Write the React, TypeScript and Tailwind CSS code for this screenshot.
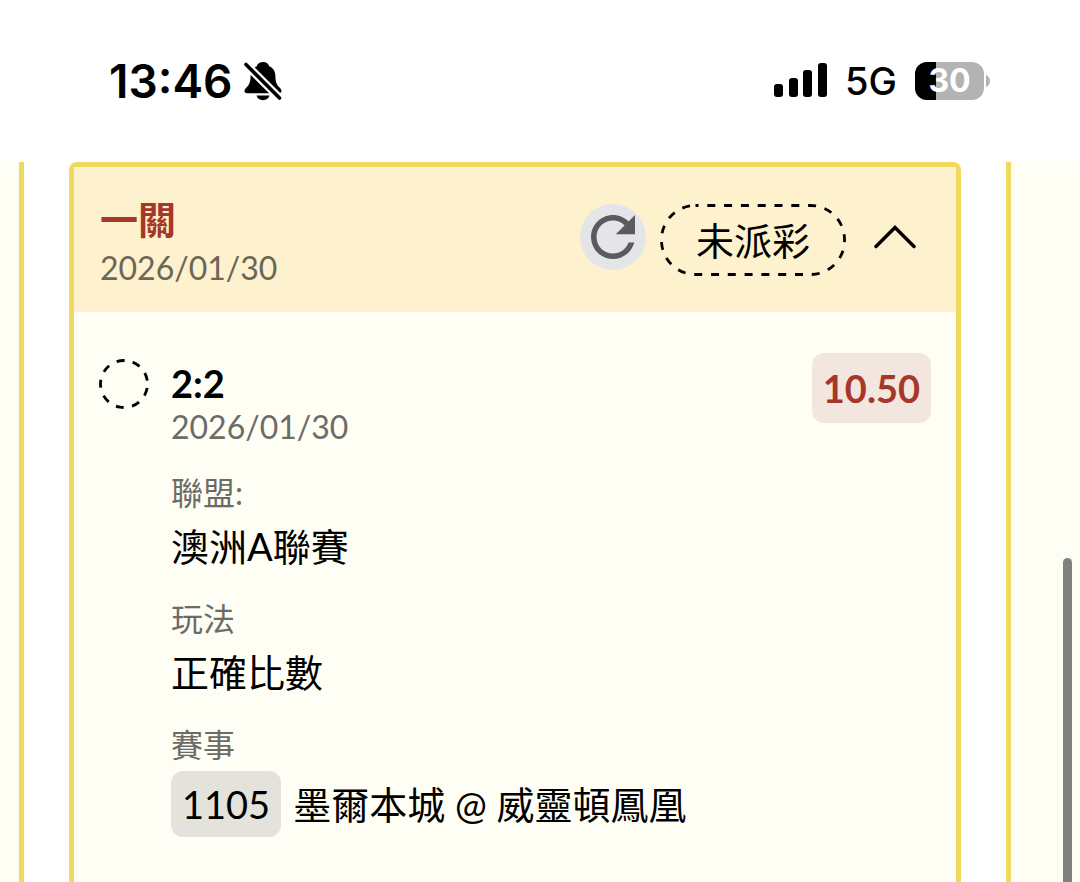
import { useState } from "react";

interface Detail {
  label: string;
  value: string;
}

const details: Detail[] = [
  { label: "聯盟:", value: "澳洲A聯賽" },
  { label: "玩法", value: "正確比數" },
];

const battery = 30;

function StatusBar() {
  return (
    <div className="flex h-[162px] items-center justify-between bg-white pl-[109px] pr-[90px] font-['Inter',sans-serif] text-black">
      <div className="flex items-center gap-3">
        <span className="text-[46px] leading-[56px] font-semibold">13:46</span>
        <svg width="38" height="40" viewBox="0 0 38 40" aria-label="Silent">
          <path
            d="M19 1c-3.4 0-5.6 1.8-6.2 4.3C8.6 7 6.700 10.500 6.600 15c-.1 6-1.200 8.600-3.900 11.200C1.300 27.600.5 28.700.5 30c0 1.300 1 2.200 2.600 2.200h31.800c1.600 0 2.600-.9 2.600-2.200 0-1.300-.8-2.400-2.200-3.800-2.700-2.600-3.800-5.200-3.900-11.200-.1-4.500-2-8-6.200-9.700C24.600 2.800 22.400 1 19 1z"
            fill="#000"
          />
          <path d="M12.500 34.500h13c-.8 2.900-3.300 4.700-6.500 4.700s-5.700-1.800-6.500-4.700z" fill="#000" />
          <path d="M0 1.500L38 39.500" stroke="#fff" strokeWidth="8" />
          <path d="M2 3.500L35.500 37" stroke="#000" strokeWidth="3.600" strokeLinecap="round" />
        </svg>
      </div>
      <div className="flex items-center gap-[18px]">
        <svg width="54" height="36" viewBox="0 0 54 36" aria-label="Signal">
          <rect x="1" y="21" width="9" height="13" rx="3" />
          <rect x="16" y="15" width="9" height="19" rx="3" />
          <rect x="30" y="7" width="9" height="27" rx="3" />
          <rect x="45" y="0" width="9" height="34" rx="3" />
        </svg>
        <span className="text-[38px] leading-[46px] font-medium">5G</span>
        <div className="flex items-center gap-[2px]">
          <div className="relative flex h-[38px] w-[69px] items-center justify-center overflow-hidden rounded-xl bg-[#b3b3b3]">
            <div className="absolute inset-y-0 left-0 bg-black" style={{ width: `${battery}%` }} />
            <span className="relative text-[32px] leading-[38px] font-bold text-white">{battery}</span>
          </div>
          <svg width="4" height="12" viewBox="0 0 4 12" fill="#b3b3b3" aria-hidden="true">
            <path d="M0 0c2.500 1 4 3.400 4 6s-1.500 5-4 6z" />
          </svg>
        </div>
      </div>
    </div>
  );
}

function RefreshIcon() {
  return (
    <svg width="66" height="66" viewBox="0 0 24 24" fill="#5b5b5d">
      <path d="M17.650 6.350C16.200 4.900 14.210 4 12 4c-4.420 0-7.990 3.580-7.990 8s3.570 8 7.990 8c3.730 0 6.840-2.550 7.730-6h-2.080c-.82 2.330-3.040 4-5.650 4-3.310 0-6-2.690-6-6s2.690-6 6-6c1.660 0 3.140.69 4.220 1.780L13 11h7V4l-2.350 2.350z" />
    </svg>
  );
}

export default function App() {
  const [open, setOpen] = useState(true);

  return (
    <div className="relative flex min-h-screen flex-col overflow-hidden bg-white font-['Lato','Noto_Sans_CJK_TC',sans-serif]">
      <StatusBar />
      <main className="flex flex-1">
        <div className="w-6 border-r-[5px] border-[#f0d95f] bg-[#fffef5]" />
        <section className="mx-[45px] flex flex-1 flex-col rounded-t-lg border-x-[5px] border-t-[5px] border-[#f0d95f] bg-[#fffef5]">
          <header className="flex items-start justify-between bg-[#fdf1ce] px-[26px] pb-5">
            <div className="pt-[27px]">
              <h1 className="text-[38px] leading-[50px] font-bold text-[#a5382a]">一關</h1>
              <p className="text-[32px] leading-12 text-[#6b6656]">2026/01/30</p>
            </div>
            <div className="flex items-start pt-[37px] pr-3.5">
              <button
                type="button"
                aria-label="Refresh"
                className="mr-3.5 flex size-[66px] items-center justify-center rounded-full bg-[#e3e5e8]"
              >
                <RefreshIcon />
              </button>
              <div className="relative mr-7 px-9 py-2 text-[38px] leading-[56px] text-black">
                <svg className="absolute inset-0 h-full w-full" fill="none" aria-hidden="true">
                  <rect
                    x="1.5"
                    y="1.5"
                    width="calc(100% - 3px)"
                    height="calc(100% - 3px)"
                    rx="34"
                    stroke="#000"
                    strokeWidth="2.800"
                    strokeDasharray="8 8.800"
                    strokeDashoffset="5"
                  />
                </svg>
                未派彩
              </div>
              <button
                type="button"
                aria-label="Toggle details"
                aria-expanded={open}
                className="flex h-[66px] items-center"
                onClick={() => setOpen(!open)}
              >
                <svg width="42" height="26" viewBox="0 0 42 26" fill="none">
                  <path d="M2 22.500L21 3.500l19 19" stroke="#000" strokeWidth="3.500" strokeLinecap="round" />
                </svg>
              </button>
            </div>
          </header>

          {open && (
            <div className="flex items-start px-[25px] pt-[41px] pb-11">
              <svg className="mt-1.5 mr-[22px]" width="50" height="50" viewBox="0 0 50 50" fill="none" aria-hidden="true">
                <circle
                  cx="25"
                  cy="25"
                  r="23.500"
                  stroke="#000"
                  strokeWidth="2.800"
                  strokeDasharray="8 8.406"
                  transform="rotate(10 25 25)"
                />
              </svg>
              <div className="flex-1 pt-2">
                <h2 className="text-[38px] leading-[44px] font-bold text-black">2:2</h2>
                <p className="text-[32px] leading-[44px] text-[#6c6c67]">2026/01/30</p>
                <dl className="mt-5 flex flex-col gap-5">
                  {details.map((item) => (
                    <div key={item.label}>
                      <dt className="text-[32px] leading-[48px] text-[#6c6c67]">{item.label}</dt>
                      <dd className="text-[38px] leading-[58px] text-black">{item.value}</dd>
                    </div>
                  ))}
                  <div>
                    <dt className="text-[32px] leading-[48px] text-[#6c6c67]">賽事</dt>
                    <dd className="mt-0.5 flex items-center gap-3 text-[38px] leading-[66px] text-black">
                      <span className="rounded-xl bg-[#e3e2db] px-[11px]">1105</span>
                      <span>墨爾本城 @ 威靈頓鳳凰</span>
                    </dd>
                  </div>
                </dl>
              </div>
              <span className="rounded-xl bg-[#f3e6df] px-[11px] text-[38px] leading-[70px] font-bold text-[#a5382a]">
                10.50
              </span>
            </div>
          )}
        </section>
        <div className="w-[74px] border-l-[5px] border-[#f0d95f] bg-[#fffef5]" />
      </main>
      {/* scroll thumb */}
      <div className="absolute top-[558px] right-2 bottom-0 w-[9px] rounded-t-full bg-[#80807c]" />
    </div>
  );
}
